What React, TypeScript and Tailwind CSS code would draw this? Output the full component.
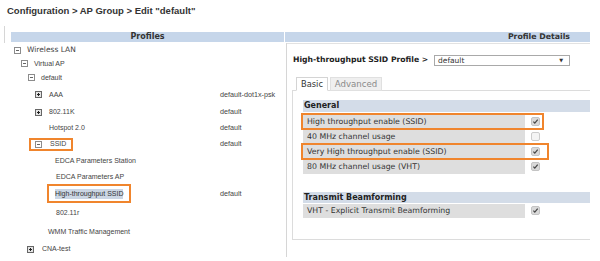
import React from "react";

const dv = { fontFamily: '"DejaVu Sans", Verdana, sans-serif' };
const lib = { fontFamily: '"Liberation Sans", Arial, sans-serif' };

type NodeIcon = "minus" | "plus" | null;

interface ITreeRow {
  h: number;
  iconX?: number;
  textX: number;
  icon: NodeIcon;
  label: string;
  value?: string;
  first?: boolean;
  selected?: boolean;
  mark?: { left: number; top: number; width: number; height: number };
}

const rows: ITreeRow[] = [
  { h: 14, iconX: 14, textX: 27, icon: "minus", label: "Wireless LAN", first: true },
  { h: 13, iconX: 21, textX: 34, icon: "minus", label: "Virtual AP" },
  { h: 15, iconX: 28, textX: 41, icon: "minus", label: "default" },
  { h: 19, iconX: 35, textX: 49, icon: "plus", label: "AAA", value: "default-dot1x-psk" },
  { h: 16, iconX: 35, textX: 49, icon: "plus", label: "802.11K", value: "default" },
  { h: 16, textX: 49, icon: null, label: "Hotspot 2.0", value: "default" },
  {
    h: 16,
    iconX: 35,
    textX: 50,
    icon: "minus",
    label: "SSID",
    value: "default",
    mark: { left: 29, top: 2, width: 44, height: 13 },
  },
  { h: 17, textX: 55, icon: null, label: "EDCA Parameters Station" },
  { h: 16, textX: 56, icon: null, label: "EDCA Parameters AP" },
  {
    h: 18,
    textX: 55,
    icon: null,
    label: "High-throughput SSID",
    value: "default",
    selected: true,
    mark: { left: 47, top: -1, width: 84, height: 19 },
  },
  { h: 19, textX: 56, icon: null, label: "802.11r" },
  { h: 19, textX: 48, icon: null, label: "WMM Traffic Management" },
  { h: 16, iconX: 27, textX: 42, icon: "plus", label: "CNA-test" },
];

const TreeIcon = ({ kind }: { kind: "minus" | "plus" }) => (
  <svg width="7" height="7" viewBox="0 0 7 7" className="shrink-0">
    <rect
      x="0.5"
      y="0.5"
      width="6"
      height="6"
      fill={kind === "plus" ? "#e4e4e4" : "#fff"}
      stroke={kind === "plus" ? "#666" : "#8c8c8c"}
    />
    <path d="M2 3.5h3" stroke={kind === "plus" ? "#222" : "#666"} strokeWidth="1" />
    {kind === "plus" && <path d="M3.5 2v3" stroke="#222" strokeWidth="1" />}
  </svg>
);

const TreeRow = ({ row }: { row: ITreeRow }) => {
  const start = 4;
  return (
    <div className="relative flex items-center" style={{ height: row.h }}>
      <div className="flex w-[216px] items-center">
        {row.icon && row.iconX !== undefined ? (
          <>
            <div style={{ width: row.iconX - start }} className="shrink-0" />
            <TreeIcon kind={row.icon} />
            <div style={{ width: row.textX - row.iconX - 7 }} className="shrink-0" />
          </>
        ) : (
          <div style={{ width: row.textX - start }} className="shrink-0" />
        )}
        <span
          className={
            row.first
              ? "text-[7.5px] leading-[10px] text-[#444]"
              : row.selected
                ? "bg-[#cbd6e4] text-[7px] leading-[10px] text-[#333]"
                : "text-[7px] leading-[10px] text-[#444]"
          }
          style={row.first ? dv : lib}
        >
          {row.label}
        </span>
      </div>
      {row.value && (
        <span className="text-[7.2px] leading-[10px] text-[#444]" style={lib}>
          {row.value}
        </span>
      )}
      {row.mark && (
        <span
          className="absolute border-2 border-[#f0852d]"
          style={{
            left: row.mark.left - start,
            top: row.mark.top,
            width: row.mark.width,
            height: row.mark.height,
          }}
        />
      )}
    </div>
  );
};

const Check = ({ on }: { on: boolean }) => (
  <svg width="9" height="9" viewBox="0 0 9 9" className="ml-[6px] shrink-0">
    <rect
      x="0.5"
      y="0.5"
      width="8"
      height="8"
      rx="1.5"
      fill={on ? "#d9d9d9" : "#f4f4f4"}
      stroke={on ? "#c4c4c4" : "#cccccc"}
    />
    {on && <path d="M2.4 4.7l1.4 1.5 2.9-3.5" fill="none" stroke="#444" strokeWidth="1.2" />}
  </svg>
);

interface IOpt {
  label: string;
  on: boolean;
  mark?: number;
}

const OptRow = ({ opt }: { opt: IOpt }) => (
  <div className="relative flex h-[15px] items-center">
    <div className="flex h-[14px] w-[222px] items-center bg-[#dedede] pl-[4px]">
      <span className="text-[7.8px] leading-[10px] text-[#333]" style={dv}>
        {opt.label}
      </span>
    </div>
    <Check on={opt.on} />
    {opt.mark && (
      <span
        className="absolute left-[-2px] top-[-1px] h-[17px] border-2 border-[#f0852d]"
        style={{ width: opt.mark }}
      />
    )}
  </div>
);

const SectionHead = ({ title, h }: { title: string; h: string }) => (
  <div className={`flex items-center bg-[#d3dce8] pl-[1px] ${h}`}>
    <span className="text-[8px] font-bold leading-[10px] text-[#222]" style={dv}>
      {title}
    </span>
  </div>
);

export default function App() {
  return (
    <div className="h-[261px] w-[600px] overflow-hidden bg-white">
      <div className="h-[26px] pl-[7px] pt-[5px]">
        <h1
          className="text-[9.5px] font-bold leading-[11px] text-[#333]"
          style={lib}
        >
          Configuration &gt; AP Group &gt; Edit "default"
        </h1>
      </div>
      <div className="flex">
        {/* Profiles tree */}
        <div className="ml-[4px] w-[283px] shrink-0">
          <div className="border-l border-[#d6d6d6] pb-[1px] pl-[6px] pt-[6px]">
            <div className="flex h-[10px] w-[273px] items-center justify-center bg-[#c6d6ea]">
              <span className="text-[8px] font-bold leading-[10px] text-[#333]" style={dv}>
                Profiles
              </span>
            </div>
          </div>
          <div className="h-[214px] border-r border-[#d6d6d6]">
            {rows.map((r) => (
              <TreeRow key={r.label} row={r} />
            ))}
          </div>
        </div>
        {/* Profile details */}
        <div className="w-[303px] shrink-0">
          <div className="pb-[1px] pt-[6px]">
            <div className="-ml-[2px] flex h-[10px] items-center justify-end bg-[#c6d6ea] pr-[20px]">
              <span className="text-[7.8px] font-bold leading-[10px] text-[#333]" style={dv}>
                Profile Details
              </span>
            </div>
          </div>
          <div className="h-[196px] border-t border-[#e2e2e2] pt-[9px]">
            <div className="flex h-[14px] items-center pl-[6px]">
              <span className="w-[141px] text-[7.7px] font-bold leading-[10px] text-[#222]" style={dv}>
                High-throughput SSID Profile &gt;
              </span>
              <div className="flex h-[11px] w-[136px] items-center justify-between border border-[#a9a9a9] pl-[3px] pr-[6px]">
                <span className="text-[7.5px] leading-[9px] text-[#333]" style={dv}>
                  default
                </span>
                <span className="text-[5px] leading-[6px] text-[#333]" style={dv}>
                  ▼
                </span>
              </div>
            </div>
            <div className="ml-[5px] mt-[10px]">
              <div className="-mb-px flex items-end pl-[4px]">
                <div className="flex h-[14px] w-[32px] items-center justify-center border border-b-white border-[#d4d4d4] bg-white">
                  <span className="text-[8.3px] leading-[10px] text-[#333]" style={dv}>
                    Basic
                  </span>
                </div>
                <div className="ml-[2px] flex h-[14px] w-[52px] items-center justify-center border border-[#e0e0e0] bg-[#efefef]">
                  <span className="text-[8.6px] leading-[10px] text-[#8a8a8a]" style={dv}>
                    Advanced
                  </span>
                </div>
              </div>
              <div className="h-[150px] border border-r-0 border-[#dcdcdc] pl-[10px] pt-[9px]">
                <SectionHead title="General" h="h-[12px]" />
                <div className="mt-[2px]">
                  <OptRow opt={{ label: "High throughput enable (SSID)", on: true, mark: 243 }} />
                  <OptRow opt={{ label: "40 MHz channel usage", on: false }} />
                  <OptRow opt={{ label: "Very High throughput enable (SSID)", on: true, mark: 248 }} />
                  <OptRow opt={{ label: "80 MHz channel usage (VHT)", on: true }} />
                </div>
                <div className="mt-[18px]">
                  <SectionHead title="Transmit Beamforming" h="h-[11px]" />
                  <OptRow opt={{ label: "VHT - Explicit Transmit Beamforming", on: true }} />
                </div>
              </div>
            </div>
          </div>
        </div>
      </div>
    </div>
  );
}
